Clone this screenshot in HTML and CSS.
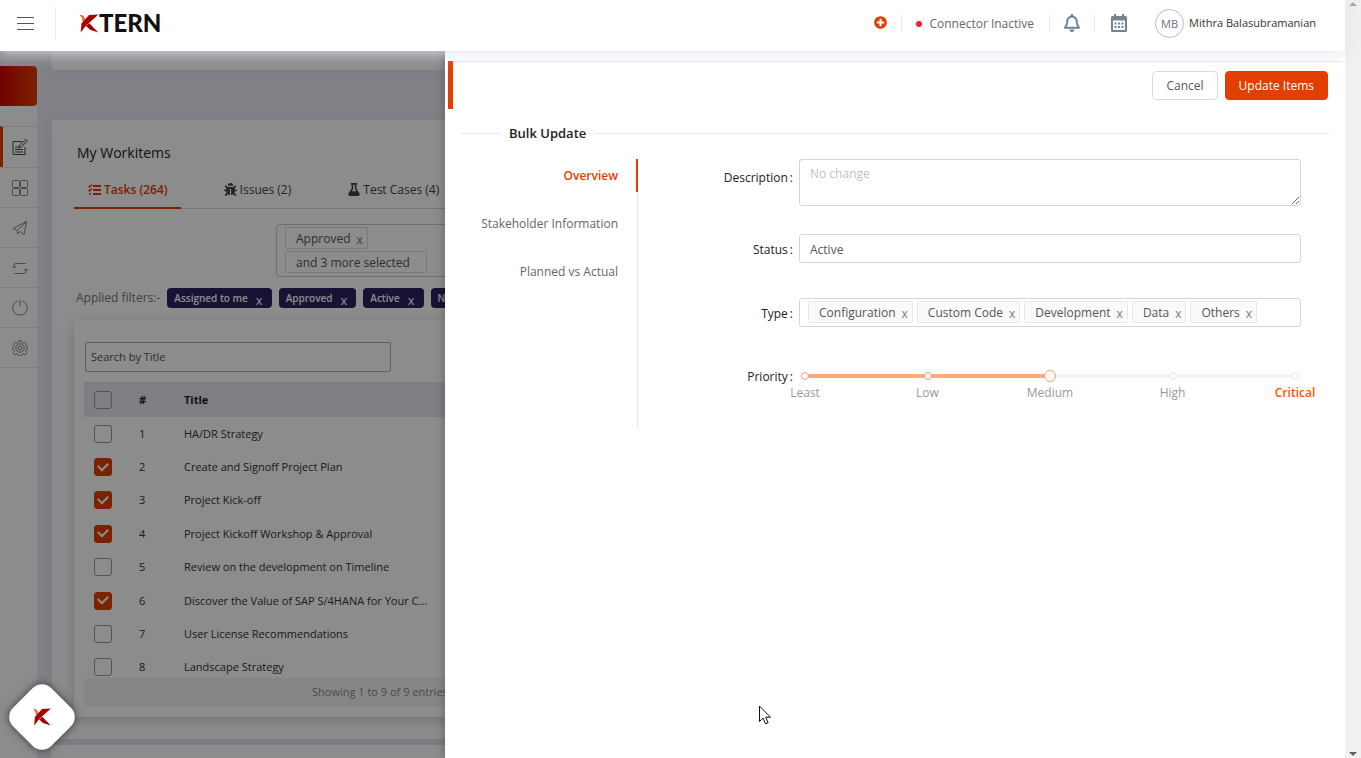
FILE: index.html
```html
<!DOCTYPE html>
<html lang="en">
<head>
<meta charset="utf-8">
<title>KTERN – Bulk Update</title>
<link rel="stylesheet" href="styles.css">
</head>
<body>
<svg class="sprite" aria-hidden="true">
  <symbol id="k-mark" viewBox="0 0 19 19">
    <path d="M0 0.600 L3.600 1.600 L6 5.500 L3.200 8.600 L2.600 4.200 Z" fill="#f26522"/>
    <path d="M1.200 18.400 L2 9.600 L9.500 1 L18.800 0.600 L9.500 9 L7 11 Z" fill="#a80000"/>
    <path d="M6.300 11.800 L9.800 9.200 L18.800 18.600 L10.500 15.800 Z" fill="#a00000"/>
  </symbol>
</svg>
<div class="window">
  <div class="shell">
    <header class="topbar">
      <button class="icon-btn menu-btn" aria-label="Menu"><i></i><i></i><i></i></button>
      <a class="logo" href="#"><svg width="20" height="19"><use href="#k-mark"/></svg><span>TERN</span></a>
      <div class="topbar-right">
        <button class="icon-btn add-btn" aria-label="Add">
          <svg width="13" height="13" viewBox="0 0 512 512" fill="#e23e00"><path d="M256 8C119 8 8 119 8 256s111 248 248 248 248-111 248-248S393 8 256 8zm144 276c0 6.600-5.400 12-12 12h-92v92c0 6.600-5.400 12-12 12h-56c-6.600 0-12-5.400-12-12v-92h-92c-6.600 0-12-5.400-12-12v-56c0-6.600 5.400-12 12-12h92v-92c0-6.600 5.400-12 12-12h56c6.600 0 12 5.400 12 12v92h92c6.600 0 12 5.400 12 12v56z"/></svg>
        </button>
        <div class="connector"><i class="status-dot"></i>Connector Inactive</div>
        <button class="icon-btn bell-btn" aria-label="Notifications">
          <svg width="16" height="18" viewBox="0 0 448 512" fill="#748494"><path d="M439.390 362.290c-19.320-20.760-55.470-51.990-55.470-154.290 0-77.700-54.480-139.900-127.940-155.160V32c0-17.670-14.320-32-31.980-32s-31.980 14.330-31.980 32v20.840C118.560 68.100 64.080 130.300 64.080 208c0 102.300-36.150 133.530-55.470 154.290-6 6.450-8.660 14.160-8.610 21.710.11 16.400 12.980 32 32.100 32h383.800c19.120 0 32-15.600 32.100-32 .05-7.550-2.610-15.270-8.610-21.710zM67.530 368c21.220-27.970 44.420-74.330 44.530-159.420 0-.2-.06-.38-.06-.58 0-61.860 50.140-112 112-112s112 50.140 112 112c0 .2-.06.38-.06.58.11 85.100 23.310 131.460 44.530 159.420H67.530zM224 512c35.320 0 63.970-28.650 63.970-64H160.030c0 35.350 28.650 64 63.970 64z" stroke="#748494" stroke-width="10"/></svg>
        </button>
        <button class="icon-btn cal-btn" aria-label="Calendar">
          <svg width="16" height="18" viewBox="0 0 16 18" fill="#748494"><path fill-rule="evenodd" d="M3 0h2v2h6V0h2v2h1.500A1.500 1.500 0 0 1 16 3.500v13a1.500 1.500 0 0 1-1.500 1.500h-13A1.500 1.500 0 0 1 0 16.500v-13A1.500 1.500 0 0 1 1.500 2H3zM2 6.500V16h12V6.500z"/><path d="M3.500 8.500h2v2h-2zM7 8.500h2v2H7zM10.500 8.500h2v2h-2zM3.500 12h2v2h-2zM7 12h2v2H7zM10.500 12h2v2h-2z"/></svg>
        </button>
        <a class="user" href="#"><span class="avatar">MB</span>Mithra Balasubramanian</a>
      </div>
    </header>

    <div class="workspace">
      <nav class="sidebar">
        <div class="side-brand"></div>
        <a class="side-item active" href="#" aria-label="Workitems"><svg viewBox="0 0 16 16"><path d="M10 2.500H1v13h12V8"/><path d="M3 10.500h8M3 13h8M3 8h3"/><path d="M6.500 9l1-3L14 .5l1.500 1.500L9 8z"/></svg></a>
        <a class="side-item" href="#" aria-label="Dashboard"><svg viewBox="0 0 16 16"><rect x=".5" y=".5" width="7" height="7" rx="1"/><rect x="8.500" y=".5" width="7" height="7" rx="1"/><rect x=".5" y="8.500" width="7" height="7" rx="1"/><rect x="8.500" y="8.500" width="7" height="7" rx="1"/></svg></a>
        <a class="side-item" href="#" aria-label="Send"><svg viewBox="0 0 16 16"><path d="M14.500 1.500L1 8.500l4.500 2L14.500 1.500l-2.500 13-4-3M5.500 10.500V14L8 11.500"/></svg></a>
        <a class="side-item" href="#" aria-label="Sync"><svg viewBox="0 0 16 16"><path d="M13.500 3.500H4a2 2 0 0 0-2 2V8M.5 6.500L2 8l2-1.500M2.500 13.500H12a2 2 0 0 0 2-2V9M12 10.500L14 9l1.500 1.500"/></svg></a>
        <a class="side-item" href="#" aria-label="Power"><svg viewBox="0 0 16 16"><path d="M5.500 1a7.300 7.300 0 1 0 5 0M8 0v6"/></svg></a>
        <a class="side-item" href="#" aria-label="Settings"><svg viewBox="0 0 16 16"><circle cx="8" cy="8" r="2"/><circle cx="8" cy="8" r="4.200"/><path d="M6.700.7h2.600l.5 1.800 1.700.7 1.700-.9 1.500 1.500-.9 1.700.7 1.700 1.500.4v1.800l-1.500.5-.7 1.700.9 1.700-1.500 1.500-1.700-.9-1.700.7-.5 1.500H6.700l-.5-1.500-1.700-.7-1.700.9-1.500-1.500.9-1.700-.7-1.700L.5 9.400V7.600L1.500 7.200l.7-1.700-.9-1.700 1.500-1.500 1.700.9 1.700-.7z"/></svg></a>
      </nav>

      <main class="content">
        <section class="card card-top"></section>
        <section class="card workitems">
          <h2 class="card-title">My Workitems</h2>
          <div class="tabs">
            <button class="tab active"><svg width="13" height="12" viewBox="0 0 13 12" fill="none" stroke="currentColor"><path d="M5 2h8M5 6h8M5 10h8" stroke-width="2"/><path d="M.5 2l1 1L4 .5M.5 6l1 1L4 4.500M1 10h2" stroke-width="1.300"/></svg>Tasks (264)</button>
            <button class="tab"><svg width="13" height="13" viewBox="0 0 512 512" fill="currentColor"><path d="M511.988 288.900c-.478 17.430-15.217 31.100-32.653 31.100H424v16c0 21.864-4.882 42.584-13.600 61.145l60.228 60.228c12.496 12.497 12.496 32.758 0 45.255-12.498 12.497-32.759 12.496-45.256 0l-54.736-54.736C345.886 467.965 314.351 480 280 480V236c0-6.627-5.373-12-12-12h-24c-6.627 0-12 5.373-12 12v244c-34.351 0-65.886-12.035-90.636-32.108l-54.736 54.736c-12.498 12.497-32.759 12.496-45.256 0-12.496-12.497-12.496-32.758 0-45.255l60.228-60.228C92.882 378.584 88 357.864 88 336v-16H32.666C15.230 320 .491 306.330.013 288.900-.484 270.816 14.028 256 32 256h56v-58.745l-46.628-46.628c-12.496-12.497-12.496-32.758 0-45.255 12.498-12.497 32.758-12.497 45.256 0L141.255 160h229.489l54.627-54.627c12.498-12.497 32.758-12.497 45.256 0 12.496 12.497 12.496 32.758 0 45.255L424 197.255V256h56c17.972 0 32.484 14.816 31.988 32.900zM257 0c-61.856 0-112 50.144-112 112h224C369 50.144 318.856 0 257 0z"/></svg>Issues (2)</button>
            <button class="tab"><svg width="12" height="13" viewBox="0 0 448 512" fill="currentColor"><path d="M437.200 403.500L320 215V64h8c13.300 0 24-10.700 24-24V24c0-13.300-10.700-24-24-24H120c-13.300 0-24 10.700-24 24v16c0 13.300 10.700 24 24 24h8v151L10.800 403.500C-18.500 450.600 15.300 512 70.900 512h306.200c55.700 0 89.400-61.500 60.100-108.500zM137.900 320l48.200-77.600c3.700-5.200 5.800-11.600 5.800-18.400V64h64v160c0 6.900 2.200 13.200 5.800 18.400l48.200 77.600h-172z"/></svg>Test Cases (4)</button>
          </div>
          <div class="multi-select">
            <span class="tag">Approved <button class="tag-x" aria-label="Remove Approved">x</button></span>
            <span class="tag more">and 3 more selected</span>
          </div>
          <div class="filters">
            <span class="filters-label">Applied filters:-</span>
            <span class="chip">Assigned to me<button aria-label="Remove">x</button></span>
            <span class="chip">Approved<button aria-label="Remove">x</button></span>
            <span class="chip">Active<button aria-label="Remove">x</button></span>
            <span class="chip">New<button aria-label="Remove">x</button></span>
          </div>
          <div class="list-card">
            <input class="search" type="text" placeholder="Search by Title" aria-label="Search by Title">
            <div class="table-wrap">
              <table class="items">
                <thead><tr><th class="c-check"><input type="checkbox" aria-label="Select all"></th><th class="c-num">#</th><th>Title</th></tr></thead>
                <tbody>
                  <tr><td><input type="checkbox" aria-label="Select 1"></td><td>1</td><td>HA/DR Strategy</td></tr>
                  <tr><td><input type="checkbox" aria-label="Select 2" checked></td><td>2</td><td>Create and Signoff Project Plan</td></tr>
                  <tr><td><input type="checkbox" aria-label="Select 3" checked></td><td>3</td><td>Project Kick-off</td></tr>
                  <tr><td><input type="checkbox" aria-label="Select 4" checked></td><td>4</td><td>Project Kickoff Workshop &amp; Approval</td></tr>
                  <tr><td><input type="checkbox" aria-label="Select 5"></td><td>5</td><td>Review on the development on Timeline</td></tr>
                  <tr><td><input type="checkbox" aria-label="Select 6" checked></td><td>6</td><td>Discover the Value of SAP S/4HANA for Your C...</td></tr>
                  <tr><td><input type="checkbox" aria-label="Select 7"></td><td>7</td><td>User License Recommendations</td></tr>
                  <tr><td><input type="checkbox" aria-label="Select 8"></td><td>8</td><td>Landscape Strategy</td></tr>
                </tbody>
              </table>
            </div>
            <div class="list-footer">Showing 1 to 9 of 9 entries</div>
          </div>
        </section>
        <section class="card card-next"></section>
      </main>

      <div class="mask"></div>
      <button class="fab" aria-label="KTERN assistant"><svg width="18" height="18"><use href="#k-mark"/></svg></button>

      <aside class="drawer">
        <div class="drawer-bar">
          <button class="btn">Cancel</button>
          <button class="btn primary">Update Items</button>
        </div>
        <h3 class="divider">Bulk Update</h3>
        <div class="drawer-body">
          <div class="side-tabs">
            <button class="side-tab active">Overview</button>
            <button class="side-tab">Stakeholder Information</button>
            <button class="side-tab">Planned vs Actual</button>
          </div>
          <form class="form">
            <label for="desc">Description<span>:</span></label>
            <textarea id="desc" class="field" placeholder="No change"></textarea>
            <label for="status">Status<span>:</span></label>
            <select id="status" class="field"><option>Active</option></select>
            <label for="type">Type<span>:</span></label>
            <div class="field tag-field">
              <span class="tag">Configuration <button type="button" class="tag-x" aria-label="Remove Configuration">x</button></span>
              <span class="tag">Custom Code <button type="button" class="tag-x" aria-label="Remove Custom Code">x</button></span>
              <span class="tag">Development <button type="button" class="tag-x" aria-label="Remove Development">x</button></span>
              <span class="tag">Data <button type="button" class="tag-x" aria-label="Remove Data">x</button></span>
              <span class="tag">Others <button type="button" class="tag-x" aria-label="Remove Others">x</button></span>
              <input id="type" type="text">
            </div>
            <label for="priority">Priority<span>:</span></label>
            <div class="slider">
              <div class="rail"><div class="rail-fill"></div></div>
              <div class="dots"><i class="on"></i><i class="on"></i><i class="on"></i><i></i><i></i></div>
              <input id="priority" type="range" min="0" max="4" value="2">
              <div class="marks"><span>Least</span><span>Low</span><span>Medium</span><span>High</span><span class="critical">Critical</span></div>
            </div>
          </form>
        </div>
      </aside>
    </div>
  </div>
  <div class="scrollbar"><i class="arrow up"></i><i class="arrow down"></i></div>
</div>
<svg class="cursor" width="13" height="20" viewBox="0 0 13 20"><path d="M1.500 1v15.500l3.600-3.400 2.400 5.700 2.600-1.100-2.400-5.500h4.800z" fill="#fff" stroke="#111" stroke-width="1"/></svg>
</body>
</html>
```
FILE: styles.css
```css
* { box-sizing: border-box; }
body {
  margin: 0;
  font: 12px/20px "Open Sans", "Noto Sans", sans-serif;
  color: #333;
  background: #fff;
}
button, input, select, textarea { font: inherit; color: inherit; }
button { background: none; border: 0; padding: 0; cursor: pointer; }
a { color: inherit; text-decoration: none; }
.sprite { position: absolute; width: 0; height: 0; }

.window { display: flex; height: 100vh; overflow: hidden; }
.shell { flex: 1; min-width: 0; display: flex; flex-direction: column; }

/* page scrollbar */
.scrollbar {
  width: 16px;
  background: #f0f0f0;
  display: flex;
  flex-direction: column;
  justify-content: space-between;
  align-items: center;
  padding: 2px 0;
}
.arrow { border: 4px solid transparent; }
.arrow.up { border-top: 0; border-bottom-color: #a0a0a0; }
.arrow.down { border-bottom: 0; border-top-color: #606060; }

/* top bar */
.topbar {
  position: relative;
  z-index: 10;
  flex: none;
  height: 51px;
  background: #fff;
  box-shadow: 0 1px 14px 1px rgba(226, 229, 240, .9);
  display: flex;
  align-items: center;
  padding: 0 29px 5px 17px;
}
.icon-btn { display: flex; align-items: center; justify-content: center; }
.menu-btn { flex-direction: column; gap: 5px; width: 17px; }
.menu-btn i { width: 17px; height: 1px; background: #555; }
.logo {
  display: flex;
  align-items: center;
  height: 34px;
  margin-left: 21px;
  padding-left: 23px;
  border-left: 1px solid #ebedf2;
  font: 900 24px/34px Lato, sans-serif;
  color: #111;
}
.topbar-right { margin-left: auto; display: flex; align-items: center; }
.topbar-right > * { height: 18px; }
.add-btn { width: 28px; padding: 0 14px 2px 0; border-right: 1px solid #e8eaf0; }
.connector {
  display: flex;
  align-items: center;
  gap: 7px;
  padding: 1px 15px 0 14px;
  color: #666;
  border-right: 1px solid #e8eaf0;
}
.status-dot { width: 6px; height: 6px; border-radius: 50%; background: #fd1f30; }
.bell-btn { width: 45px; border-right: 1px solid #e8eaf0; }
.cal-btn { width: 47px; }
.topbar-right .user { display: flex; align-items: center; gap: 5px; height: 29px; margin-left: 13px; font-size: 11px; }
.avatar {
  width: 29px;
  height: 29px;
  border: 1px solid #b5bcc9;
  border-radius: 50%;
  text-align: center;
  line-height: 27px;
  color: #6b7280;
}

.workspace { position: relative; flex: 1; min-height: 0; display: flex; overflow: hidden; background: #e9edf5; }
.mask { position: absolute; inset: 0; background: rgba(0, 0, 0, .45); }

/* left navigation */
.sidebar { flex: none; width: 37px; margin-top: 15px; background: #fff; }
.side-brand {
  height: 40px;
  margin-bottom: 20px;
  border-radius: 0 4px 4px 0;
  background: linear-gradient(90deg, #d00000, #e23e00);
}
.side-item {
  display: flex;
  align-items: center;
  justify-content: center;
  height: 40px;
  border-top: 1px solid #e4e4e8;
  padding-left: 3px;
}
.side-item:last-child { height: 41px; border-bottom: 1px solid #e4e4e8; }
.side-item.active { height: 41px; border-left: 3px solid #e23e00; padding-left: 0; }
.side-item svg { width: 16px; height: 16px; fill: none; stroke: #85858c; stroke-width: 1; }
.side-item.active svg { stroke: #44464a; }

/* page content */
.content { flex: 1; min-width: 0; padding: 0 14px; display: flex; flex-direction: column; }
.card { flex: none; background: #fff; box-shadow: 0 0 12px rgba(82, 63, 105, .08); }
.card-top { height: 19px; margin-bottom: 50px; border-radius: 0 0 4px 4px; }
.card-next { flex: 1; margin-top: 6px; }
.workitems { margin-left: 1px; padding: 22px; }
.card-title { margin: 0 0 6px 3px; font: inherit; font-size: 14px; line-height: 22px; color: #222; }
.tabs { display: flex; gap: 29px; height: 39px; border-bottom: 1px solid #d8d8d8; }
.tab {
  display: flex;
  align-items: center;
  gap: 3px;
  height: 39px;
  padding: 0 14px;
  color: #444;
}
.tab.active { color: #e23e00; font-weight: 600; padding: 2px 13px 0 14px; border-bottom: 2px solid #e23e00; }

.tag {
  display: inline-flex;
  align-items: center;
  gap: 6px;
  height: 22px;
  padding: 1px 4px 0 10px;
  border: 1px solid #e8e8e8;
  border-radius: 2px;
  background: #fafafa;
  color: #555;
}
.tag-x { line-height: 18px; padding-top: 2px; color: #777; }
.multi-select {
  display: flex;
  flex-direction: column;
  align-items: flex-start;
  gap: 2px;
  height: 53px;
  margin: 15px 0 11px 202px;
  padding: 2px 8px;
  border: 1px solid #c8c8c8;
  border-radius: 4px;
}
.multi-select .tag { border-color: #dcdcdc; background: none; }
.multi-select .more { padding-right: 16px; }

.filters { display: flex; align-items: center; gap: 7px; height: 20px; padding-left: 2px; }
.filters-label { color: #777; }
.chip {
  display: flex;
  gap: 8px;
  height: 20px;
  padding: 0 9px 0 7px;
  border-radius: 4px;
  background: #2a2360;
  color: #fff;
  font-size: 10px;
  font-weight: 600;
}
.chip button { font-size: 13px; font-weight: 400; padding-top: 2px; }

.list-card {
  margin-top: 12px;
  padding: 22px 10px 11px;
  border-radius: 4px;
  box-shadow: 0 4px 14px rgba(0, 0, 0, .18);
}
.search {
  display: block;
  width: 306px;
  height: 30px;
  margin-left: 1px;
  padding: 0 5px 1px;
  border: 1px solid #b0b0b0;
  border-radius: 2px;
  background: none;
  font-size: 11px;
}
.search::placeholder { color: #555; }
.table-wrap { height: 296px; margin-top: 10px; overflow: hidden; }
.items { width: 100%; height: 302px; border-collapse: collapse; table-layout: fixed; font-size: 11px; }
.items th, .items td { padding: 0; text-align: left; white-space: nowrap; }
.items td:first-child, .items th:first-child { padding-left: 10px; }
.items thead { height: 35px; background: #e3e7f1; color: #222; }
.items .c-check { width: 55px; }
.items .c-num { width: 45px; }
.items input {
  appearance: none;
  display: block;
  width: 18px;
  height: 18px;
  margin: 0;
  border: 1px solid #999;
  border-radius: 3px;
}
.items input:checked {
  border-color: #e23e00;
  background: #e23e00;
  display: grid;
  place-items: center;
}
.items input:checked::before {
  content: "";
  width: 8px;
  height: 5px;
  margin-bottom: 4px;
  border: solid #fff;
  border-width: 0 0 2px 2px;
  transform: rotate(-45deg);
}
.list-footer { height: 28px; line-height: 28px; padding-left: 228px; background: #f5f5f5; color: #888; font-size: 11px; }

/* floating assistant button */
.fab {
  position: absolute;
  left: 9px;
  bottom: 8px;
  width: 66px;
  height: 66px;
  display: grid;
  place-items: center;
}
.fab::before {
  content: "";
  grid-area: 1 / 1;
  width: 54px;
  height: 54px;
  border-radius: 13px;
  background: #fff;
  box-shadow: 0 0 8px rgba(0, 0, 0, .6);
  transform: rotate(45deg);
}
.fab svg { grid-area: 1 / 1; z-index: 1; }

/* drawer */
.drawer {
  position: absolute;
  top: 0;
  right: 0;
  bottom: 0;
  width: 900px;
  max-width: 100%;
  padding: 10px 3px 0;
  background: #fff;
  box-shadow: -2px 0 8px rgba(0, 0, 0, .2);
}
.drawer-bar {
  display: flex;
  justify-content: flex-end;
  gap: 7px;
  height: 48px;
  padding: 10px 14px 0;
  border-left: 5px solid #e23e00;
  background: linear-gradient(#e8e8e8, #e8e8e8) top / 100% 1px no-repeat;
}
.btn {
  height: 29px;
  padding: 0 13px;
  border: 1px solid #d9d9d9;
  border-radius: 4px;
  color: #555;
}
.btn.primary { border-color: #e23e00; background: #e23e00; color: #fff; }
.divider {
  display: flex;
  align-items: center;
  gap: 9px;
  margin: 14px 13px 16px;
  font-size: 13px;
  font-weight: 600;
  line-height: 20px;
  color: #222;
}
.divider::before, .divider::after { content: ""; height: 1px; background: #e8e8e8; }
.divider::before { width: 39px; }
.divider::after { flex: 1; }
.drawer-body { display: flex; margin: 0 41px 0 13px; }
.side-tabs {
  flex: none;
  width: 177px;
  height: 269px;
  display: flex;
  flex-direction: column;
  gap: 15px;
  background: linear-gradient(#e8e8e8, #e8e8e8) right / 1px 100% no-repeat;
}
.side-tab { height: 33px; padding: 0 20px 0 0; text-align: right; color: #666; }
.side-tab.active { color: #e23e00; font-weight: 600; border-right: 2px solid #e23e00; padding-right: 18px; }

.form {
  flex: 1;
  min-width: 0;
  display: grid;
  grid-template-columns: 155px 1fr;
  column-gap: 6px;
  align-content: start;
}
.form label { display: block; text-align: right; line-height: 32px; color: #222; }
.form label span { margin-left: 2px; }
.form label[for="desc"] { padding-top: 3px; }
.field {
  width: 100%;
  height: 29px;
  border: 1px solid #d4d4d4;
  border-radius: 3px;
  background: #fff;
  color: #555;
}
textarea.field { display: block; height: 47px; margin-bottom: 28px; padding: 4px 10px; outline: 0; }
textarea.field::placeholder { color: #bfbfbf; }
select.field { appearance: none; margin-bottom: 35px; padding: 2px 10px 0; }
.tag-field { display: flex; align-items: flex-start; gap: 4px; padding: 2px 8px; margin-bottom: 34px; }
.tag-field .tag { flex: none; }
.tag-field input { flex: 1; min-width: 0; width: 0; height: 22px; border: 0; background: none; outline: 0; padding: 0; }

/* priority slider: rail and dots lie below the transparent range input */
.slider { position: relative; height: 46px; }
.rail { position: absolute; top: 13px; left: 6px; right: 6px; height: 4px; border-radius: 2px; background: #f5f5f5; }
.rail-fill { width: 50%; height: 4px; border-radius: 2px; background: #ffab7a; }
.dots { position: absolute; top: 11px; left: 2px; right: 2px; display: flex; justify-content: space-between; }
.dots i { width: 8px; height: 8px; border: 1px solid #e4e4e4; border-radius: 50%; background: #fff; }
.dots .on { border-color: #f09a78; }
.slider input { position: absolute; top: 9px; left: 0; width: 100%; height: 12px; margin: 0; appearance: none; background: none; }
.slider input::-webkit-slider-thumb {
  appearance: none;
  width: 12px;
  height: 12px;
  border: 1px solid #ff9c66;
  border-radius: 50%;
  background: #fff;
}
.marks { position: absolute; top: 22px; left: 6px; right: 6px; display: flex; justify-content: space-between; color: #999; }
.marks span { width: 0; display: flex; justify-content: center; white-space: nowrap; }
.marks .critical { color: #ff5500; font-weight: 600; }

.cursor { position: absolute; left: 758px; top: 705px; z-index: 20; pointer-events: none; }
```
